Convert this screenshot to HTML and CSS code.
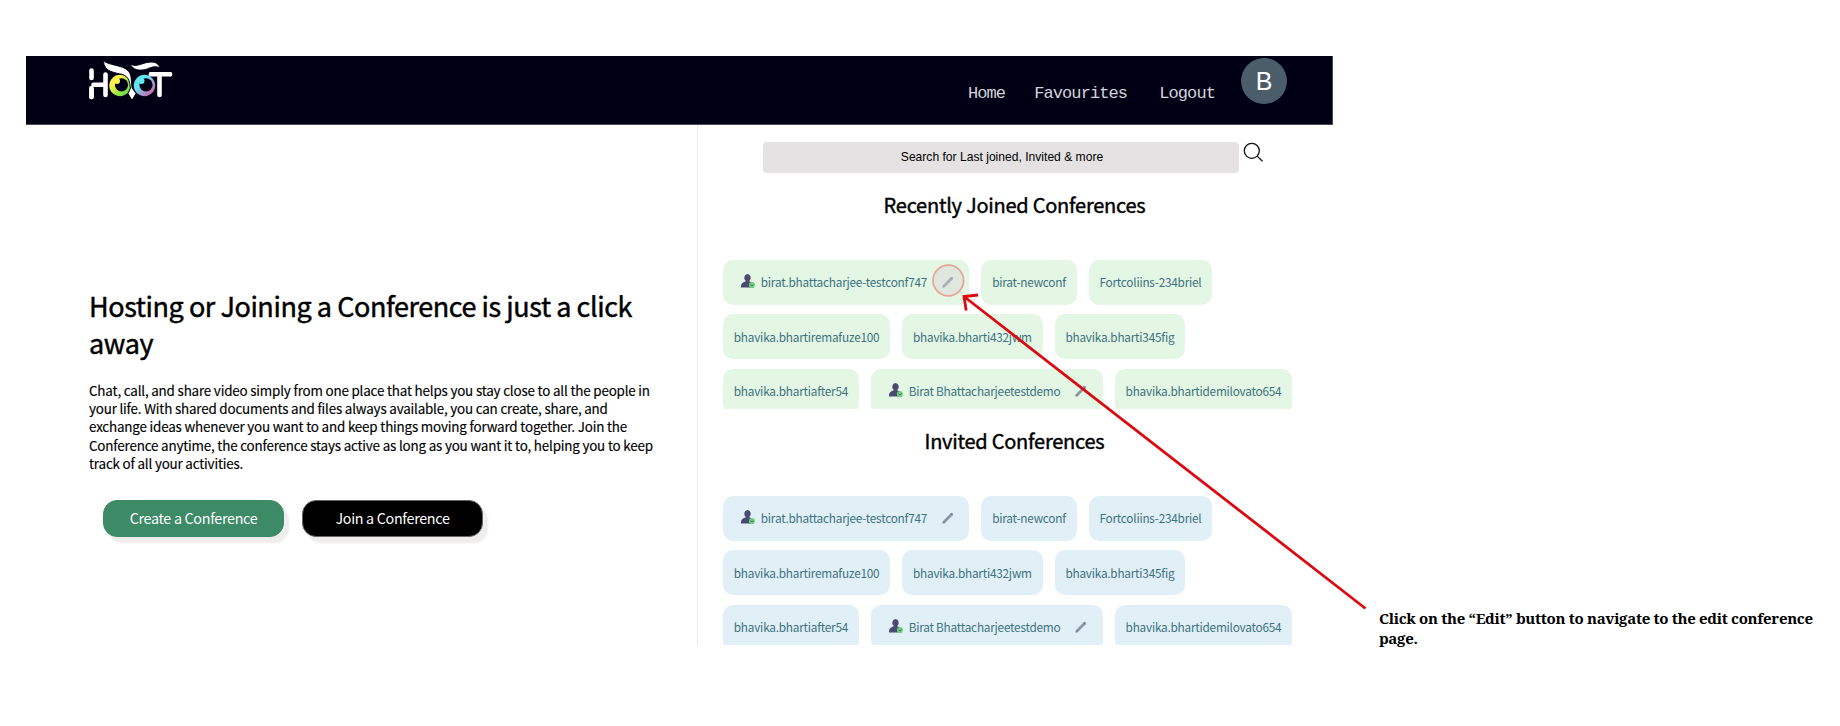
FILE: index.html
```html
<!DOCTYPE html>
<html lang="en">
<head>
<meta charset="utf-8">
<title>Hoot</title>
<link rel="stylesheet" href="styles.css">
</head>
<body>
<svg class="defs" width="0" height="0">
  <symbol id="user" viewBox="0 0 14 14">
    <path fill="#4c4a73" d="M6.500 0a3.300 3.600 0 0 1 2 6.400v1.200c2.200.7 4.500 1.700 4.500 4.400v1.500H0V12c0-2.700 2.300-3.700 4.500-4.400V6.400A3.300 3.600 0 0 1 6.500 0z"/>
    <circle cx="10.900" cy="11" r="3" fill="#6fcf7c"/>
    <path d="M9.500 10.600l1.400 1.400 1.400-1.400" fill="none" stroke="#3c6b4f" stroke-width="1"/>
  </symbol>
  <symbol id="pencil" viewBox="0 0 12 12">
    <path d="M2.300 9.700L9.700 2.300" stroke="#8a98a6" stroke-width="2.800" stroke-linecap="round"/>
    <path d="M.3 11.700l.7-3 2.300 2.300z" fill="#7d8893"/>
    <path d="M8.600 1.600l1.800 1.800" stroke="#6f7d8b" stroke-width="1"/>
  </symbol>
</svg>
<div class="window">
  <header class="nav">
    <svg class="logo" width="84" height="40" viewBox="0 0 84 40">
      <defs>
        <linearGradient id="g1" x1="0" y1="0" x2="1" y2="1"><stop offset=".3" stop-color="#fdf04a"/><stop offset=".8" stop-color="#6be23f"/></linearGradient>
        <linearGradient id="g2" x1="0" y1="0" x2="1" y2="1"><stop offset=".35" stop-color="#62e6ee"/><stop offset=".9" stop-color="#d75aa8"/></linearGradient>
      </defs>
      <g stroke="#fff" stroke-width="4.600" stroke-linecap="round" fill="none">
        <path d="M2.500 10.500V18M2.500 29.500V37M4.500 24.800H15M16.500 14.500V35M62 14.300H81M70.500 15V35"/>
        <path d="M2.500 28V37"/>
      </g>
      <circle cx="31" cy="25.500" r="10.700" fill="url(#g1)"/>
      <circle cx="32.500" cy="24.800" r="6.600" fill="#000014"/>
      <circle cx="28" cy="21" r="3" fill="#fdf04a"/>
      <circle cx="55.500" cy="25.500" r="10.700" fill="url(#g2)"/>
      <circle cx="57" cy="24.800" r="6.600" fill="#000014"/>
      <circle cx="52.500" cy="21" r="3" fill="#62e6ee"/>
      <path stroke="#000014" stroke-width="6.600" stroke-linecap="round" d="M64 14.300H78M70.500 15V35"/>
      <path stroke="#fff" stroke-width="4.600" stroke-linecap="round" d="M62 14.300H81M70.500 15V35"/>
      <path fill="#fff" stroke="#000014" stroke-width="1" d="M14.500.5c4 5 19 4 25 10.500 3.500 4 2.700 11 3.500 16.500l.5 1 3.500 5-4 7-4-7 2.500-5.500c-1-5.500-1-11-8-13.500-7-2-19-2-19-14zM41 4c7 4 13-2 21-2 5 0 8 2 8.500 6-5-3-9 0-14 1.500C50 11 44 10 41 4z"/>
    </svg>
    <nav class="links"><a class="home">Home</a><a class="fav">Favourites</a><a>Logout</a></nav>
    <div class="avatar">B</div>
  </header>
  <main class="main">
    <section class="intro">
      <h1>Hosting or Joining a Conference is just a click<br>away</h1>
      <p>Chat, call, and share video simply from one place that helps you stay close to all the people in<br>your life. With shared documents and files always available, you can create, share, and<br>exchange ideas whenever you want to and keep things moving forward together. Join the<br>Conference anytime, the conference stays active as long as you want it to, helping you to keep<br>track of all your activities.</p>
      <div class="actions"><button class="btn create">Create a Conference</button><button class="btn join">Join a Conference</button></div>
    </section>
    <section class="side">
      <div class="search"><div class="field"><span>Search for Last joined, Invited &amp; more</span></div>
        <svg width="20" height="20" viewBox="0 0 20 20" fill="none" stroke="#111" stroke-width="1.300"><circle cx="8.800" cy="8.800" r="7.500"/><path d="M14.100 14.100l5.400 5.200"/></svg></div>
      <h2>Recently Joined Conferences</h2>
      <div class="list joined">
        <div class="row"><div class="chip owned"><svg class="user"><use href="#user"/></svg><span>birat.bhattacharjee-testconf747</span><svg class="pencil"><use href="#pencil"/></svg></div><div class="chip"><span>birat-newconf</span></div><div class="chip"><span>Fortcoliins-234briel</span></div></div>
        <div class="row"><div class="chip"><span>bhavika.bhartiremafuze100</span></div><div class="chip"><span>bhavika.bharti432jwm</span></div><div class="chip"><span>bhavika.bharti345fig</span></div></div>
        <div class="row"><div class="chip"><span>bhavika.bhartiafter54</span></div><div class="chip owned"><svg class="user"><use href="#user"/></svg><span>Birat Bhattacharjeetestdemo</span><svg class="pencil"><use href="#pencil"/></svg></div><div class="chip"><span>bhavika.bhartidemilovato654</span></div></div>
      </div>
      <h2>Invited Conferences</h2>
      <div class="list invited">
        <div class="row"><div class="chip owned"><svg class="user"><use href="#user"/></svg><span>birat.bhattacharjee-testconf747</span><svg class="pencil"><use href="#pencil"/></svg></div><div class="chip"><span>birat-newconf</span></div><div class="chip"><span>Fortcoliins-234briel</span></div></div>
        <div class="row"><div class="chip"><span>bhavika.bhartiremafuze100</span></div><div class="chip"><span>bhavika.bharti432jwm</span></div><div class="chip"><span>bhavika.bharti345fig</span></div></div>
        <div class="row"><div class="chip"><span>bhavika.bhartiafter54</span></div><div class="chip owned"><svg class="user"><use href="#user"/></svg><span>Birat Bhattacharjeetestdemo</span><svg class="pencil"><use href="#pencil"/></svg></div><div class="chip"><span>bhavika.bhartidemilovato654</span></div></div>
      </div>
    </section>
  </main>
</div>
<p class="note">Click on the “Edit” button to navigate to the edit conference<br>page.</p>
<svg class="overlay" width="1840" height="726">
  <circle cx="948.300" cy="280.500" r="15.300" fill="#d9d3d6" fill-opacity=".4" stroke="#e9a497" stroke-width="1.700"/>
  <path d="M1365.500 608.500L964 296.500M978 295l-14 1.500 2.200 14" fill="none" stroke="#dd0910" stroke-width="2.800"/>
</svg>
</body>
</html>
```
FILE: styles.css
```css
* { box-sizing: border-box; }
body { margin: 0; width: 1840px; height: 726px; background: #fff; overflow: hidden; color: #000; font-family: "Noto Sans CJK JP", "Noto Sans", sans-serif; }
h1, h2, p { margin: 0; white-space: nowrap; }
.defs, .overlay { position: absolute; left: 0; top: 0; }
.window { margin: 0 0 0 26px; padding-top: 56px; width: 1307px; }
.nav { display: flex; height: 69px; background: #000014; padding: 2px 45px 0 63px; border-right: 1px solid #4a4960; border-bottom: 1px solid #4a4960; }
.logo { margin-top: 2px; }
.links { display: flex; margin-left: auto; padding-top: 25px; color: #d4d4dc; font: 17px/22px "Liberation Mono", monospace; letter-spacing: -0.9px; }
.home { margin-right: 29px; }
.fav { margin-right: 32px; }
.avatar { margin-left: 26px; width: 46px; height: 46px; border-radius: 50%; background: #4b5d68; color: #fff; font: 25px/47px "Liberation Sans", sans-serif; text-align: center; }
.main { display: flex; height: 520px; }
.intro { width: 671px; padding: 163px 0 0 63px; }
h1 { font-size: 27px; font-weight: 400; line-height: 36.500px; letter-spacing: -0.44px; -webkit-text-stroke: 0.45px #000; }
.intro p { margin-top: 20px; font-size: 13.400px; line-height: 18.200px; letter-spacing: -0.18px; -webkit-text-stroke: 0.15px #000; }
.actions { display: flex; gap: 18px; margin: 27.500px 0 0 14px; }
.btn { width: 181px; height: 37px; border: 1px solid #3c8a66; border-radius: 14px; padding: 0; background: #3c8a66; color: #fff; font: 14.300px/34px "Noto Sans CJK JP", sans-serif; letter-spacing: -0.3px; box-shadow: 5px 6px 2px #f0eded; }
.join { background: #000; border-color: #666; }
.side { flex: 1; border-left: 1px solid #e9e9e9; padding: 17px 0 0 25px; }
.search { display: flex; gap: 4px; margin-left: 40px; }
.field { width: 476px; height: 31px; padding-left: 2px; border-radius: 4px; background: #e4e2e2; font: 12.100px/31px "Liberation Sans", sans-serif; text-align: center; }
h2 { width: 583px; text-align: center; font-size: 20px; font-weight: 400; line-height: 30px; letter-spacing: -0.25px; margin-top: 17px; -webkit-text-stroke: 0.4px #000; }
.list { height: 150px; overflow: hidden; margin-top: 39px; padding-top: 0.500px; }
.row { display: flex; gap: 12px; margin-bottom: 9.500px; }
.chip { display: flex; align-items: center; height: 45px; padding: 0 10.800px; border-radius: 10px; background: #e4f6e4; color: #3d7280; font-size: 11.800px; line-height: 20px; letter-spacing: -0.23px; white-space: nowrap; }
.invited .chip { background: #e1f0f7; }
.user { width: 14px; height: 14px; margin: -2px 6px 0 7px; }
.pencil { width: 12px; height: 12px; margin: 0 5px 0 14.500px; }
.note { position: absolute; left: 1379px; top: 608px; font: bold 15px/20px "Noto Serif", serif; letter-spacing: -0.31px; }
```
